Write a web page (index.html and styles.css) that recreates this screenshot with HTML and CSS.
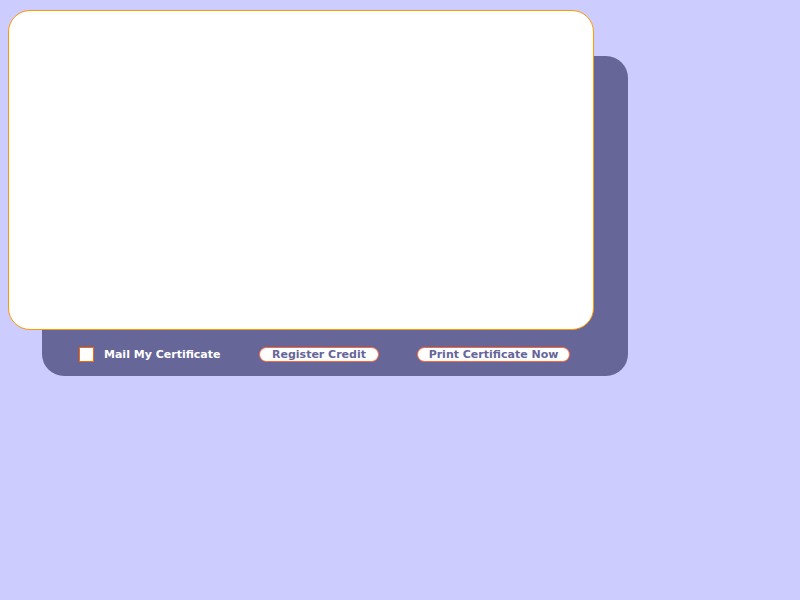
FILE: index.html
```html
<!DOCTYPE html>
<html>
<head>
<meta charset="utf-8">
<link rel="stylesheet" href="styles.css">
</head>
<body>
<div class="stage">
  <div class="panel">
    <div class="actions">
      <label class="mail">
        <span class="box"></span>
        <span class="mail-text">Mail My Certificate</span>
      </label>
      <button class="btn btn-register">Register Credit</button>
      <button class="btn btn-print">Print Certificate Now</button>
    </div>
  </div>
  <div class="card"></div>
</div>
</body>
</html>
```

FILE: styles.css
```css
html, body {
  background: #ccccff;
}
body {
  margin: 10px 8px 8px 8px;
  font-family: "DejaVu Sans", Verdana, sans-serif;
}
.stage {
  display: grid;
  width: 620px;
}
.card, .panel {
  grid-area: 1 / 1;
  box-sizing: border-box;
  width: 586px;
  height: 320px;
  border-radius: 22px;
}
.card {
  background: #ffffff;
  border: 1px solid #ff9900;
  z-index: 1;
}
.panel {
  margin-left: 34px;
  margin-top: 46px;
  background: #666699;
  display: flex;
  flex-direction: column;
  justify-content: flex-end;
  padding-bottom: 14px;
}
.actions {
  display: flex;
  align-items: center;
  height: 15px;
  padding-left: 37px;
}
.mail {
  display: flex;
  align-items: center;
  width: 180px;
}
.box {
  box-sizing: border-box;
  width: 15px;
  height: 15px;
  background: #ffffff;
  border: 1px solid #ff6600;
}
.mail-text {
  margin-left: 10px;
  color: #ffffff;
  font-size: 11px;
  font-weight: bold;
  white-space: nowrap;
}
.btn {
  box-sizing: border-box;
  height: 15px;
  padding: 0;
  background: #ffffff;
  border: 1px solid #ff6633;
  border-radius: 8px;
  color: #666699;
  font-family: "DejaVu Sans", Verdana, sans-serif;
  font-size: 11px;
  font-weight: bold;
  line-height: 13px;
  text-align: center;
  white-space: nowrap;
}
.btn-register {
  width: 120px;
}
.btn-print {
  margin-left: 38px;
  width: 153px;
}
```
